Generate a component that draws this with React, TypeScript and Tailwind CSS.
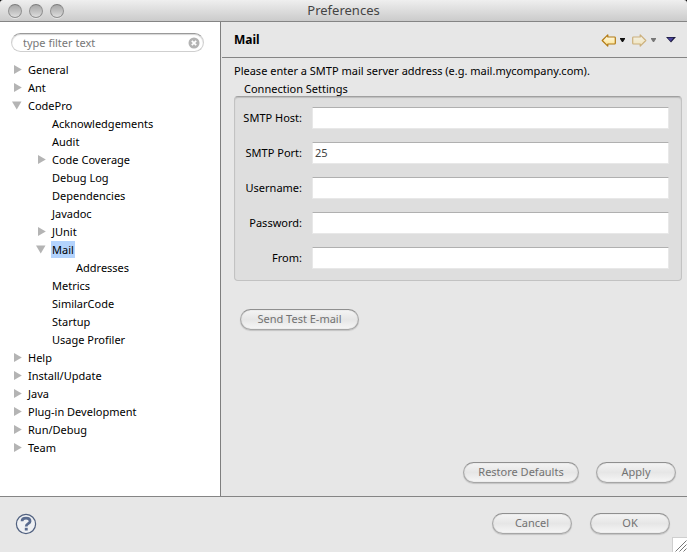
import { useState } from "react";

type Node = { label: string; children?: Node[]; expandable?: boolean; open?: boolean };

const tree: Node[] = [
  { label: "General", expandable: true },
  { label: "Ant", expandable: true },
  {
    label: "CodePro",
    expandable: true,
    open: true,
    children: [
      { label: "Acknowledgements" },
      { label: "Audit" },
      { label: "Code Coverage", expandable: true },
      { label: "Debug Log" },
      { label: "Dependencies" },
      { label: "Javadoc" },
      { label: "JUnit", expandable: true },
      { label: "Mail", expandable: true, open: true, children: [{ label: "Addresses" }] },
      { label: "Metrics" },
      { label: "SimilarCode" },
      { label: "Startup" },
      { label: "Usage Profiler" },
    ],
  },
  { label: "Help", expandable: true },
  { label: "Install/Update", expandable: true },
  { label: "Java", expandable: true },
  { label: "Plug-in Development", expandable: true },
  { label: "Run/Debug", expandable: true },
  { label: "Team", expandable: true },
];

function Disclosure({ open }: { open: boolean }) {
  return (
    <svg viewBox="0 0 10 10" className="size-2.5" fill="#b4b4b4" aria-hidden="true">
      <path d={open ? "M0 1.500h9.500L4.750 9.500z" : "M2 1v9L9.800 5.500z"} />
    </svg>
  );
}

function TreeItem({
  node,
  selected,
  onSelect,
}: {
  node: Node;
  selected: string;
  onSelect: (label: string) => void;
}) {
  const [open, setOpen] = useState(Boolean(node.open));
  const active = selected === node.label;
  return (
    <li>
      <div className="flex h-[18px] items-center">
        {node.expandable ? (
          <button
            type="button"
            aria-label={(open ? "Collapse " : "Expand ") + node.label}
            onClick={() => setOpen(!open)}
            className="mr-[5px] w-2.5"
          >
            <Disclosure open={open} />
          </button>
        ) : (
          <span className="mr-[5px] w-2.5" />
        )}
        <button
          type="button"
          onClick={() => onSelect(node.label)}
          className={"h-[17px] px-px leading-[17px] " + (active ? "bg-[#b3d3fd]" : "")}
        >
          {node.label}
        </button>
      </div>
      {open && node.children && (
        <ul className="pl-6">
          {node.children.map((child) => (
            <TreeItem key={child.label} node={child} selected={selected} onSelect={onSelect} />
          ))}
        </ul>
      )}
    </li>
  );
}

function TrafficLight({ label }: { label: string }) {
  return (
    <button
      type="button"
      aria-label={label}
      className="size-3.5 rounded-full border border-[#909090] border-t-[#7c7c7c] bg-linear-to-b from-[#a8a8a8] via-[#c0c0c0] to-[#dedede] shadow-[0_1px_0_#e6e6e6]"
    />
  );
}

function PillButton({ children, className }: { children: string; className: string }) {
  return (
    <button
      type="button"
      className={
        "h-[21px] rounded-full border border-[#a6a6a6] border-t-[#8f8f8f] bg-linear-to-b from-[#f4f4f4] via-[#e6e6e6] to-[#f6f6f6] text-[#727272] shadow-[0_1px_1px_#c4c4c4,inset_0_0_1px_#a0a0a0] " +
        className
      }
    >
      {children}
    </button>
  );
}

const fields = [
  { id: "host", label: "SMTP Host:", value: "", type: "text" },
  { id: "port", label: "SMTP Port:", value: "25", type: "text" },
  { id: "user", label: "Username:", value: "", type: "text" },
  { id: "password", label: "Password:", value: "", type: "password" },
  { id: "from", label: "From:", value: "", type: "text" },
];

function ArrowIcon({ flip, faded }: { flip?: boolean; faded?: boolean }) {
  return (
    <svg
      viewBox="0 0 15 13"
      className={"h-[13px] w-[15px] " + (flip ? "-scale-x-100 " : "") + (faded ? "opacity-50" : "")}
      aria-hidden="true"
    >
      <defs>
        <linearGradient id="arrow-fill" x1="0" y1="0" x2="0" y2="1">
          <stop offset="0" stopColor="#fffdf0" />
          <stop offset="1" stopColor="#fbe08a" />
        </linearGradient>
      </defs>
      <path
        d="M1.200 6.500 6.800 0.900V3H13.500q0.800 0 0.800 0.800v5.400q0 0.800-0.800 0.800H6.800v2.100z"
        fill="url(#arrow-fill)"
        stroke="#b27a12"
        strokeWidth="1.200"
        strokeLinejoin="round"
      />
    </svg>
  );
}

function Caret({ color }: { color: string }) {
  return (
    <svg viewBox="0 0 5 4" className="h-1 w-[5px]" fill={color} aria-hidden="true">
      <path d="M0 0h5v1L3 4H2L0 1z" />
    </svg>
  );
}

export default function App() {
  const [selected, setSelected] = useState("Mail");
  return (
    <div className="flex min-h-screen flex-col bg-[#e7e7e7] font-['Noto_Sans','Open_Sans',sans-serif] text-[11px] text-black">
      <div className="bg-black">
        <header className="flex h-[22px] items-center rounded-t-[3px] border-b border-[#858585] bg-linear-to-b from-[#efefef] to-[#cbcbcb] px-2">
          <div className="flex flex-1 gap-[7px]">
            <TrafficLight label="Close" />
            <TrafficLight label="Minimize" />
            <TrafficLight label="Zoom" />
          </div>
          <h1 className="pb-0.5 text-[13px] leading-5 text-[#444]">Preferences</h1>
          <div className="flex-1" />
        </header>
      </div>

      <div className="flex flex-1">
        <aside className="w-[221px] shrink-0 border-r border-[#7f7f7f] bg-white px-3 pt-[11px]">
          <div className="-ml-px mr-1 flex h-[19px] items-center rounded-full border border-[#cfcfcf] border-t-[#9a9a9a] bg-white pr-[3px] pl-[11px] shadow-[inset_0_1px_1px_#d6d6d6]">
            <input
              type="text"
              aria-label="Filter preferences"
              placeholder="type filter text"
              className="min-w-0 flex-1 pt-px outline-none placeholder:text-[#777]"
            />
            <button type="button" aria-label="Clear filter">
              <svg viewBox="0 0 12 12" className="size-3" aria-hidden="true">
                <circle cx="6" cy="6" r="5.500" fill="#b3b3b3" />
                <path d="M3.800 3.800l4.400 4.400M8.200 3.800L3.800 8.200" stroke="#fff" strokeWidth="1.700" />
              </svg>
            </button>
          </div>
          <ul className="mt-2">
            {tree.map((node) => (
              <TreeItem key={node.label} node={node} selected={selected} onSelect={setSelected} />
            ))}
          </ul>
        </aside>

        <main className="flex min-w-0 flex-1 flex-col">
          <div className="ml-px flex h-9 items-center justify-between border-b border-[#858585] pr-[11px] pl-3">
            <h2 className="text-xs font-bold">Mail</h2>
            <div className="flex items-center pt-px">
              <button type="button" aria-label="Back">
                <ArrowIcon />
              </button>
              <button type="button" aria-label="Back history" className="ml-1">
                <Caret color="#111" />
              </button>
              <button type="button" aria-label="Forward" className="ml-[7px]">
                <ArrowIcon flip faded />
              </button>
              <button type="button" aria-label="Forward history" className="ml-1">
                <Caret color="#777" />
              </button>
              <button type="button" aria-label="Menu" className="ml-2.5">
                <svg viewBox="0 0 10 6" className="h-1.5 w-2.5" aria-hidden="true">
                  <path d="M0 0h10L5 5.500z" fill="#1c1a3c" />
                  <path d="M1.500 0.800h6L4.800 4.200z" fill="#4a43a0" />
                </svg>
              </button>
            </div>
          </div>

          <div className="flex flex-1 flex-col pr-[5px] pl-[13px]">
            <p className="mt-1 leading-[18px]">
              Please enter a SMTP mail server address (e.g. mail.mycompany.com).
            </p>
            <section aria-labelledby="connection-title">
              <h3 id="connection-title" className="pt-px pl-2.5 leading-[15px]">
                Connection Settings
              </h3>
              <div className="flex flex-col gap-[13px] rounded-[4px] border border-[#c2c2c2] border-t-[#a0a0a0] bg-[#dedede] pt-2.5 pr-3 pb-[11px] pl-1 shadow-[inset_0_1px_1px_#bdbdbd]">
                {fields.map((field) => (
                  <div key={field.id} className="flex items-center">
                    <label htmlFor={field.id} className="w-[63px] shrink-0 text-right">
                      {field.label}
                    </label>
                    <input
                      id={field.id}
                      type={field.type}
                      defaultValue={field.value}
                      className="ml-2.5 h-[22px] min-w-0 flex-1 border border-[#e8e8e8] border-t-[#b0b0b0] bg-white px-0.5 pb-0.5 text-[#444] outline-none"
                    />
                  </div>
                ))}
              </div>
            </section>
            <PillButton className="mt-7 ml-1.5 w-[119px]">Send Test E-mail</PillButton>
            <div className="mt-auto mr-1.5 mb-[13px] flex justify-end gap-[17px]">
              <PillButton className="w-[116px]">Restore Defaults</PillButton>
              <PillButton className="w-[80px]">Apply</PillButton>
            </div>
          </div>
        </main>
      </div>

      <footer className="relative flex h-14 items-center justify-between border-t border-[#858585] pr-[17px] pb-0.5 pl-[15px]">
        <button type="button" aria-label="Help">
          <svg viewBox="0 0 22 22" className="size-[22px]" aria-hidden="true">
            <circle cx="11" cy="11" r="9.600" fill="#eef0f3" stroke="#50607f" strokeWidth="1.200" />
            <path
              d="M7 8.200C7 6 8.700 5.200 11 5.200s4.100 1 4.100 3c0 2.700-3.900 2.300-3.900 5.200"
              fill="none"
              stroke="#596b8f"
              strokeWidth="2.700"
            />
            <rect x="9.800" y="14.800" width="2.900" height="2.700" fill="#596b8f" />
          </svg>
        </button>
        <div className="flex gap-[18px]">
          <PillButton className="w-[80px]">Cancel</PillButton>
          <PillButton className="w-[80px]">OK</PillButton>
        </div>
        <svg
          viewBox="0 0 15 15"
          className="absolute right-0 bottom-0 size-[15px]"
          aria-hidden="true"
        >
          <rect width="15" height="15" fill="#cfcfcf" />
          <rect x="1" y="1" width="14" height="14" fill="#fff" />
          <path d="M3.500 14.500l11-11M7.500 14.500l7-7M11.500 14.500l3-3" stroke="#777" />
        </svg>
      </footer>
    </div>
  );
}
